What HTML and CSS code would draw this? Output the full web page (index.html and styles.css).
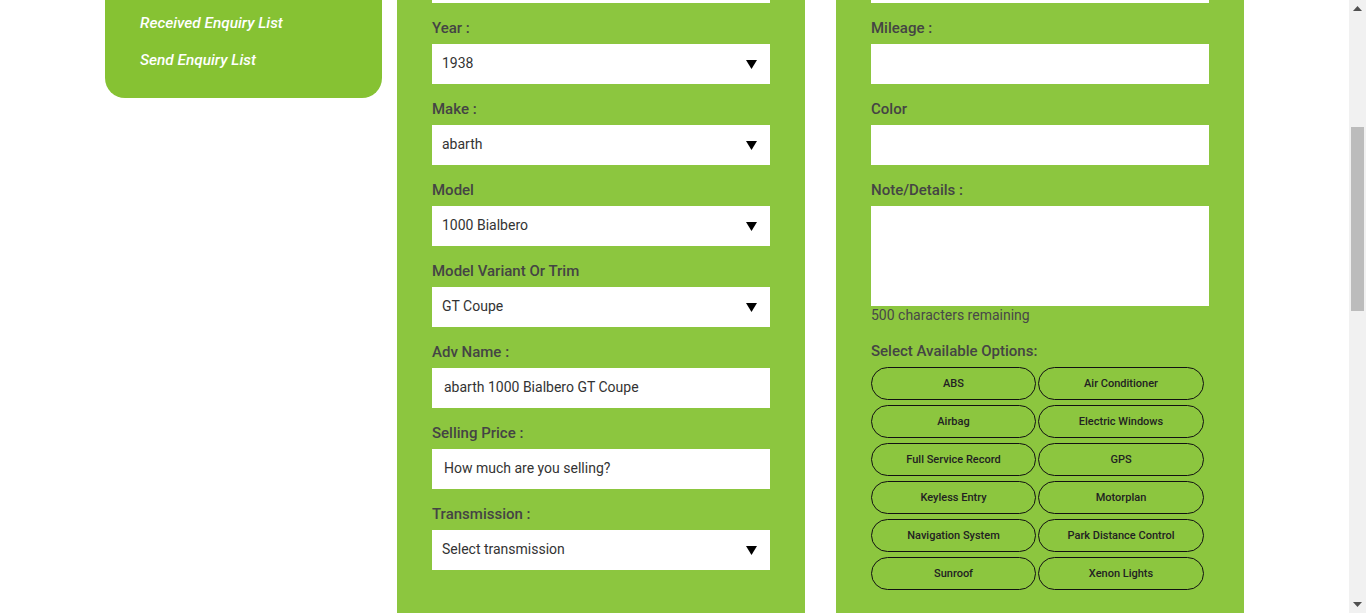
FILE: index.html
```html
<!DOCTYPE html>
<html>
<head>
<meta charset="utf-8">
<link rel="stylesheet" href="styles.css">
</head>
<body>
<div class="page">
  <div class="main">
    <div class="content">
      <aside class="sidebar">
        <a class="side-link">Received Enquiry List</a>
        <a class="side-link">Send Enquiry List</a>
      </aside>

      <section class="panel">
        <div class="field stub"></div>
        <div class="group">
          <div class="label">Year :</div>
          <div class="field select"><span>1938</span><svg class="caret" width="11" height="9" viewBox="0 0 11 9"><path d="M0 0H11L5.5 9Z" fill="#000"/></svg></div>
        </div>
        <div class="group">
          <div class="label">Make :</div>
          <div class="field select"><span>abarth</span><svg class="caret" width="11" height="9" viewBox="0 0 11 9"><path d="M0 0H11L5.5 9Z" fill="#000"/></svg></div>
        </div>
        <div class="group">
          <div class="label">Model</div>
          <div class="field select"><span>1000 Bialbero</span><svg class="caret" width="11" height="9" viewBox="0 0 11 9"><path d="M0 0H11L5.5 9Z" fill="#000"/></svg></div>
        </div>
        <div class="group">
          <div class="label">Model Variant Or Trim</div>
          <div class="field select"><span>GT Coupe</span><svg class="caret" width="11" height="9" viewBox="0 0 11 9"><path d="M0 0H11L5.5 9Z" fill="#000"/></svg></div>
        </div>
        <div class="group">
          <div class="label">Adv Name :</div>
          <div class="field text"><span>abarth 1000 Bialbero GT Coupe</span></div>
        </div>
        <div class="group">
          <div class="label">Selling Price :</div>
          <div class="field text"><span>How much are you selling?</span></div>
        </div>
        <div class="group">
          <div class="label">Transmission :</div>
          <div class="field select"><span>Select transmission</span><svg class="caret" width="11" height="9" viewBox="0 0 11 9"><path d="M0 0H11L5.5 9Z" fill="#000"/></svg></div>
        </div>
      </section>

      <section class="panel">
        <div class="field stub"></div>
        <div class="group">
          <div class="label">Mileage :</div>
          <div class="field text"></div>
        </div>
        <div class="group">
          <div class="label">Color</div>
          <div class="field text"></div>
        </div>
        <div class="group">
          <div class="label">Note/Details :</div>
          <div class="field area"></div>
          <div class="remaining">500 characters remaining</div>
        </div>
        <div class="group options-group">
          <div class="label">Select Available Options:</div>
          <div class="options">
            <button class="opt">ABS</button>
            <button class="opt">Air Conditioner</button>
            <button class="opt">Airbag</button>
            <button class="opt">Electric Windows</button>
            <button class="opt">Full Service Record</button>
            <button class="opt">GPS</button>
            <button class="opt">Keyless Entry</button>
            <button class="opt">Motorplan</button>
            <button class="opt">Navigation System</button>
            <button class="opt">Park Distance Control</button>
            <button class="opt">Sunroof</button>
            <button class="opt">Xenon Lights</button>
          </div>
        </div>
      </section>
    </div>
  </div>
  <div class="scrollbar">
    <div class="sb-btn"><svg width="9" height="5" viewBox="0 0 9 5"><path d="M0 5L4.5 0L9 5Z" fill="#505050"/></svg></div>
    <div class="sb-track">
      <div class="sb-thumb"></div>
    </div>
    <div class="sb-btn"><svg width="9" height="5" viewBox="0 0 9 5"><path d="M0 0L4.5 5L9 0Z" fill="#505050"/></svg></div>
  </div>
</div>
</body>
</html>
```
FILE: styles.css
```css
* { box-sizing: border-box; }
html, body { margin: 0; padding: 0; height: 100%; overflow: hidden; }
body {
  font-family: Roboto, "Liberation Sans", Arial, sans-serif;
  background: #fff;
  color: #333;
}
.page {
  display: flex;
  width: 1366px;
  height: 613px;
}
.main {
  flex: 0 0 1349px;
  height: 613px;
  overflow: hidden;
}
.content {
  display: flex;
  align-items: flex-start;
  padding-left: 105px;
  margin-top: -37px;
}
.sidebar {
  width: 277px;
  background: #86c233;
  border-radius: 0 0 20px 20px;
  padding: 40px 0 19px 35px;
  display: flex;
  flex-direction: column;
}
.side-link {
  display: block;
  height: 38px;
  line-height: 38px;
  color: #fff;
  font-style: italic;
  font-weight: 500;
  font-size: 15.4px;
}
.side-link:first-child { line-height: 40px; }
.panel {
  width: 408px;
  background: #8cc63f;
  padding: 0 35px 60px;
  margin-left: 15px;
  min-height: 700px;
}
.panel + .panel { margin-left: 31px; }
.field {
  background: #fff;
  height: 40px;
  display: flex;
  align-items: center;
  font-size: 14px;
  color: #333;
}
.field span { margin-bottom: 2px; }
.stub { height: 40px; }
.group { margin-top: 15px; }
.label {
  font-size: 15px;
  font-weight: 500;
  line-height: 20px;
  color: #444;
  margin-bottom: 6px;
}
.select {
  padding: 0 13px 0 10px;
  justify-content: space-between;
}
.text { padding: 0 12px; }
.caret { display: block; }
.area { height: 100px; }
.remaining {
  font-size: 14px;
  line-height: 18px;
  color: #484848;
}
.options-group { margin-top: 17px; }
.options {
  display: grid;
  grid-template-columns: 165px 166px;
  column-gap: 2px;
  row-gap: 5px;
}
.opt {
  height: 33px;
  border: 1.5px solid #111;
  border-radius: 17px;
  background: transparent;
  font-family: Roboto, "Liberation Sans", Arial, sans-serif;
  font-size: 11px;
  font-weight: 500;
  color: #222;
  padding: 0;
}
.scrollbar {
  flex: 0 0 17px;
  height: 613px;
  background: #f1f1f1;
  display: flex;
  flex-direction: column;
}
.sb-btn {
  height: 17px;
  display: flex;
  align-items: center;
  justify-content: center;
}
.sb-track {
  flex: 1;
  padding-top: 110px;
}
.sb-thumb {
  margin: 0 2px;
  height: 184px;
  background: #bcbcbc;
}
```
